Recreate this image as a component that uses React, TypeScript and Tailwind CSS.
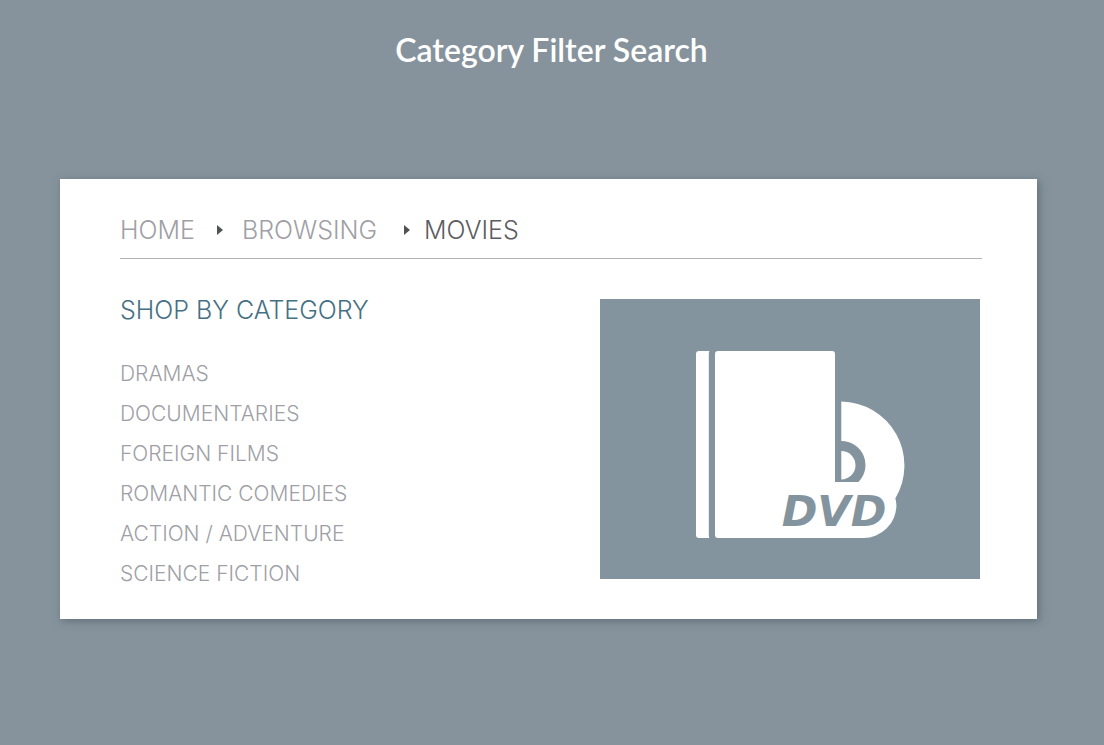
const categories = [
  "DRAMAS",
  "DOCUMENTARIES",
  "FOREIGN FILMS",
  "ROMANTIC COMEDIES",
  "ACTION / ADVENTURE",
  "SCIENCE FICTION",
];

function Caret() {
  return (
    <svg aria-hidden="true" viewBox="0 0 6 10" className="h-[10px] w-[6px] shrink-0 fill-[#505255]">
      <path d="M0 0 6 5 0 10Z" />
    </svg>
  );
}

function DvdIcon() {
  return (
    <svg role="img" aria-label="DVD" viewBox="0 0 210 187" className="h-[187px] w-[210px] fill-white">
      <path d="M3 0H13.4Q12.8 1 12.8 3V184Q12.8 186 13.4 187H3Q0 187 0 184V3Q0 0 3 0Z" />
      <path d="M22 0H136Q139 0 139 3V131H162.4A24 24 0 0 0 145.3 90V50.5A64 64 0 0 1 199.3 147.4Q200.4 150 200.4 154A33 33 0 0 1 167.4 187H22Q19 187 19 184V3Q19 0 22 0Z" />
      <path d="M145.3 100A14.2 14.2 0 0 1 145.3 128.4Z" />
      <text
        x="138"
        y="175"
        textAnchor="middle"
        className="fill-[#84949e] font-['DejaVu_Sans',sans-serif] text-[43px] font-bold italic"
      >
        DVD
      </text>
    </svg>
  );
}

export default function App() {
  return (
    <div className="min-h-screen bg-[#86939d] pt-[30px] pr-[67px] pb-[126px] pl-[60px] font-['Inter','Liberation_Sans',sans-serif]">
      <h1 className="pl-[6px] text-center font-['Lato',sans-serif] text-[32px] leading-[40px] font-semibold text-white">
        Category Filter Search
      </h1>
      <main className="mt-[109px] bg-white pt-[36px] pr-[55px] pb-[25px] pl-[60px] shadow-[2px_2px_8px_rgba(60,75,85,0.5)]">
        <nav
          aria-label="Breadcrumb"
          className="border-b border-[#b4b5b9] pb-[13px] text-[25px] leading-[30px] font-light text-[#a09fa6]"
        >
          <ol className="flex items-center">
            <li className="flex w-[122px] items-center justify-between pr-[19px]">
              <a href="#home">HOME</a>
              <Caret />
            </li>
            <li className="flex w-[168px] items-center justify-between">
              <a href="#browsing">BROWSING</a>
              <Caret />
            </li>
            <li className="pl-[14px] text-[#5c5c60]">
              <a href="#movies" aria-current="page">MOVIES</a>
            </li>
          </ol>
        </nav>
        <div className="mt-[40px] flex justify-between pr-[2px]">
          <section>
            <h2 className="-mt-[4px] text-[25px] leading-[30px] font-light text-[#467084]">SHOP BY CATEGORY</h2>
            <ul className="mt-[29px] text-[21px] leading-[40px] font-light text-[#a09fa6]">
              {categories.map((name) => (
                <li key={name}>
                  <a href="#category">{name}</a>
                </li>
              ))}
            </ul>
          </section>
          <div className="flex h-[280px] w-[380px] shrink-0 items-center justify-center bg-[#84949e] pt-[10px] pl-[22px]">
            <DvdIcon />
          </div>
        </div>
      </main>
    </div>
  );
}
